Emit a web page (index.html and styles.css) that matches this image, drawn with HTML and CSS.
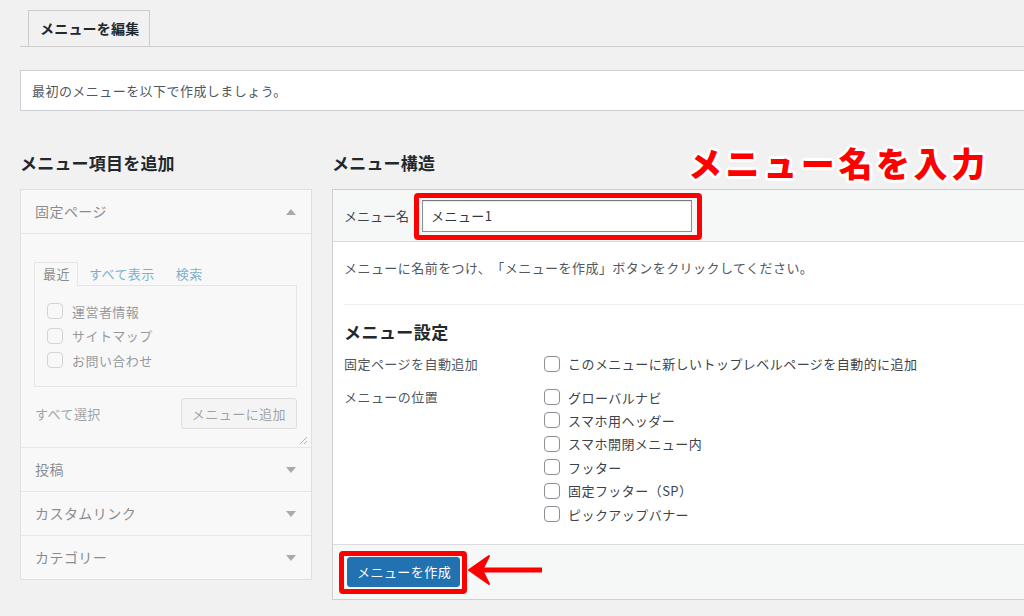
FILE: index.html
```html
<!DOCTYPE html>
<html lang="ja">
<head>
<meta charset="utf-8">
<title>メニューを編集</title>
<link rel="stylesheet" href="styles.css">
</head>
<body>
<div class="page">
  <div class="tabs"><div class="tab">メニューを編集</div></div>
  <div class="notice">最初のメニューを以下で作成しましょう。</div>
  <div class="cols">
    <div class="col-left">
      <h2 class="col-title">メニュー項目を追加</h2>
      <div class="metabox">
        <div class="acc open">
          <div class="acc-head">固定ページ<span class="tri up"></span></div>
          <div class="acc-body">
            <div class="tabrow">
              <span class="t active">最近</span>
              <span class="t link">すべて表示</span>
              <span class="t link">検索</span>
            </div>
            <div class="tabpanel">
              <div class="cb"><span class="box"></span>運営者情報</div>
              <div class="cb"><span class="box"></span>サイトマップ</div>
              <div class="cb"><span class="box"></span>お問い合わせ</div>
            </div>
            <div class="actions">
              <span class="selall">すべて選択</span>
              <span class="btn">メニューに追加</span>
            </div>
            <svg class="resize" width="9" height="9" viewBox="0 0 9 9"><path d="M1 8 L8 1 M5 8 L8 5" stroke="#777" stroke-width="1" fill="none"/></svg>
          </div>
        </div>
        <div class="acc"><div class="acc-head">投稿<span class="tri"></span></div></div>
        <div class="acc"><div class="acc-head">カスタムリンク<span class="tri"></span></div></div>
        <div class="acc last"><div class="acc-head">カテゴリー<span class="tri"></span></div></div>
      </div>
    </div>
    <div class="col-right">
      <h2 class="col-title">メニュー構造</h2>
      <div class="annot">メニュー名を入力</div>
      <div class="menu-box">
        <div class="mb-head">
          <span class="mb-label">メニュー名</span>
          <div class="inp-wrap">
            <div class="inp">メニュー1</div>
            <span class="hl hl-input"></span>
          </div>
        </div>
        <div class="mb-body">
          <p class="desc">メニューに名前をつけ、「メニューを作成」ボタンをクリックしてください。</p>
          <div class="settings">
            <h3 class="set-title">メニュー設定</h3>
            <div class="set-row">
              <div class="set-label">固定ページを自動追加</div>
              <div class="set-opts">
                <div class="opt"><span class="box2"></span>このメニューに新しいトップレベルページを自動的に追加</div>
              </div>
            </div>
            <div class="set-row">
              <div class="set-label">メニューの位置</div>
              <div class="set-opts">
                <div class="opt"><span class="box2"></span>グローバルナビ</div>
                <div class="opt"><span class="box2"></span>スマホ用ヘッダー</div>
                <div class="opt"><span class="box2"></span>スマホ開閉メニュー内</div>
                <div class="opt"><span class="box2"></span>フッター</div>
                <div class="opt"><span class="box2"></span>固定フッター（SP）</div>
                <div class="opt"><span class="box2"></span>ピックアップバナー</div>
              </div>
            </div>
          </div>
        </div>
        <div class="mb-foot">
          <div class="btn-wrap">
            <span class="btn-primary">メニューを作成</span>
            <span class="hl hl-btn"></span>
          </div>
          <svg class="pointer" width="76" height="32" viewBox="0 0 76 32">
            <rect x="12" y="13.5" width="62" height="5" fill="#f00"/>
            <path d="M1 16 L21 2 L14 16 L21 30 Z" fill="#f00" stroke="#f00" stroke-width="2" stroke-linejoin="round"/>
          </svg>
        </div>
      </div>
    </div>
  </div>
</div>
</body>
</html>
```

FILE: styles.css
```css
html, body {
  margin: 0;
  padding: 0;
}
body {
  background: #f1f1f1;
  font-family: "Noto Sans CJK JP", "Noto Sans", sans-serif;
  font-size: 13px;
  color: #3c434a;
  width: 1024px;
  height: 616px;
  overflow: hidden;
  letter-spacing: 0.45px;
  text-spacing-trim: space-all;
}
.page {
  padding-left: 20px;
  width: 1040px;
}

/* tabs */
.tabs {
  padding-top: 10px;
  padding-left: 8px;
  border-bottom: 1px solid #ccc;
  display: flex;
}
.tab {
  border: 1px solid #ccc;
  border-bottom: none;
  height: 35px;
  line-height: 35px;
  padding: 0 10px 0 11px;
  font-size: 14px;
  font-weight: 700;
  color: #23282d;
  background: #f1f1f1;
  letter-spacing: 0.2px;
}

/* notice */
.notice {
  margin-top: 23px;
  height: 39px;
  line-height: 39px;
  background: #fff;
  border: 1px solid #ccd0d4;
  padding-left: 11px;
  color: #50575e;
}

/* columns */
.cols {
  margin-top: 40px;
  display: grid;
  grid-template-columns: 292px 720px;
  column-gap: 20px;
  align-items: start;
}
.col-title {
  margin: 0 0 15px;
  font-size: 17px;
  line-height: 23px;
  font-weight: 700;
  color: #23282d;
  letter-spacing: 0.2px;
}

/* left metabox */
.metabox {
  border: 1px solid #ccd0d4;
  background: #fff;
  opacity: 0.5;
}
.acc-head {
  height: 43px;
  line-height: 43px;
  padding: 0 15px 0 14px;
  font-size: 14px;
  color: #23282d;
  display: flex;
  justify-content: space-between;
  align-items: center;
  border-bottom: 1px solid #dcdcde;
}
.acc.last .acc-head {
  border-bottom: none;
}
.tri {
  width: 0;
  height: 0;
  border-left: 5px solid transparent;
  border-right: 5px solid transparent;
  border-top: 6px solid #666;
}
.tri.up {
  border-top: none;
  border-bottom: 6px solid #666;
}
.acc-body {
  position: relative;
  padding: 28px 14px 18px 13px;
  border-bottom: 1px solid #dcdcde;
}
.tabrow {
  display: flex;
  align-items: flex-end;
  height: 23px;
}
.t {
  line-height: 22px;
  padding: 0 8px;
  font-size: 13px;
}
.t.active {
  border: 1px solid #dcdcde;
  border-bottom: none;
  color: #23282d;
  background: #fff;
  margin-bottom: -1px;
  position: relative;
  height: 23px;
  padding: 0 7px 0 8px;
}
.t.link {
  color: #0073aa;
  margin-left: 3px;
}
.t.link + .t.link {
  margin-left: 5px;
}
.tabpanel {
  border: 1px solid #dcdcde;
  padding: 13px 12px 14px;
  height: 73px;
}
.cb, .opt {
  display: flex;
  align-items: center;
  height: 24.5px;
  color: #3c434a;
}
.box {
  width: 14px;
  height: 14px;
  border: 1px solid #b4b9be;
  border-radius: 4px;
  margin-right: 9px;
  background: #fff;
}
.actions {
  margin-top: 11px;
  display: flex;
  justify-content: space-between;
  align-items: center;
}
.selall {
  color: #50575e;
  padding-left: 1px;
}
.btn {
  height: 29px;
  line-height: 29px;
  padding: 0 10px;
  border: 1px solid #ccc;
  border-radius: 3px;
  background: #f7f7f7;
  color: #555;
}
.resize {
  position: absolute;
  right: 3px;
  bottom: 2px;
}

/* right */
.col-right {
  position: relative;
}
.annot {
  position: absolute;
  left: 356px;
  top: -8px;
  font-size: 34px;
  line-height: 40px;
  font-weight: 900;
  letter-spacing: 3.6px;
  color: #f00;
  white-space: nowrap;
  text-shadow:
    2px 0 0 #fff, -2px 0 0 #fff, 0 2px 0 #fff, 0 -2px 0 #fff,
    2px 2px 0 #fff, -2px -2px 0 #fff, 2px -2px 0 #fff, -2px 2px 0 #fff,
    3px 0 1px #fff, -3px 0 1px #fff, 0 3px 1px #fff, 0 -3px 1px #fff;
}
.menu-box {
  border: 1px solid #ccd0d4;
  background: #fff;
}
.mb-head {
  height: 51px;
  display: flex;
  align-items: center;
  padding-left: 11px;
  background: #f6f7f7;
  border-bottom: 1px solid #dcdcde;
}
.mb-label {
  color: #3c434a;
  width: 66px;
  margin-right: 12px;
  white-space: nowrap;
  letter-spacing: 0;
}
.inp-wrap {
  position: relative;
}
.inp {
  width: 260px;
  height: 30px;
  line-height: 30px;
  padding: 0 0 0 8px;
  background: #fff;
  border: 1px solid #8c8f94;
  border-top-color: #777;
  box-shadow: inset 0 1px 2px rgba(0,0,0,.1);
  color: #32373c;
  font-size: 13px;
}
.hl {
  position: absolute;
  border: 5px solid #f00;
  border-radius: 4px;
  pointer-events: none;
}
.hl-input {
  left: -8px;
  right: -10px;
  top: -7px;
  bottom: -8px;
}
.mb-body {
  padding: 16px 0 18px 11px;
}
.desc {
  margin: 0;
  line-height: 20px;
  color: #50575e;
}
.settings {
  margin-top: 26px;
  border-top: 1px solid #eee;
}
.set-title {
  margin: 15px 0 9px;
  font-size: 17px;
  line-height: 23px;
  font-weight: 700;
  color: #23282d;
}
.set-row {
  display: flex;
  margin-bottom: 10px;
}
.set-row:last-child {
  margin-bottom: 0;
}
.set-label {
  width: 200px;
  line-height: 23px;
  color: #50575e;
}
.opt {
  height: 23.4px;
}
.box2 {
  width: 14px;
  height: 14px;
  border: 1px solid #8c8f94;
  border-radius: 4px;
  margin-right: 8px;
  background: #fff;
}
.mb-foot {
  height: 54px;
  border-top: 1px solid #dcdcde;
  background: #f6f7f7;
  display: flex;
  align-items: center;
  padding-left: 14px;
}
.btn-wrap {
  position: relative;
}
.btn-primary {
  display: block;
  height: 28px;
  line-height: 28px;
  padding: 0 8px 0 9px;
  background: #2271b1;
  border: 1px solid #2271b1;
  border-radius: 3px;
  color: #fff;
}
.hl-btn {
  left: -8px;
  right: -7px;
  top: -6px;
  bottom: -7px;
}
.pointer {
  margin-left: 8px;
  margin-top: -4px;
}
```
